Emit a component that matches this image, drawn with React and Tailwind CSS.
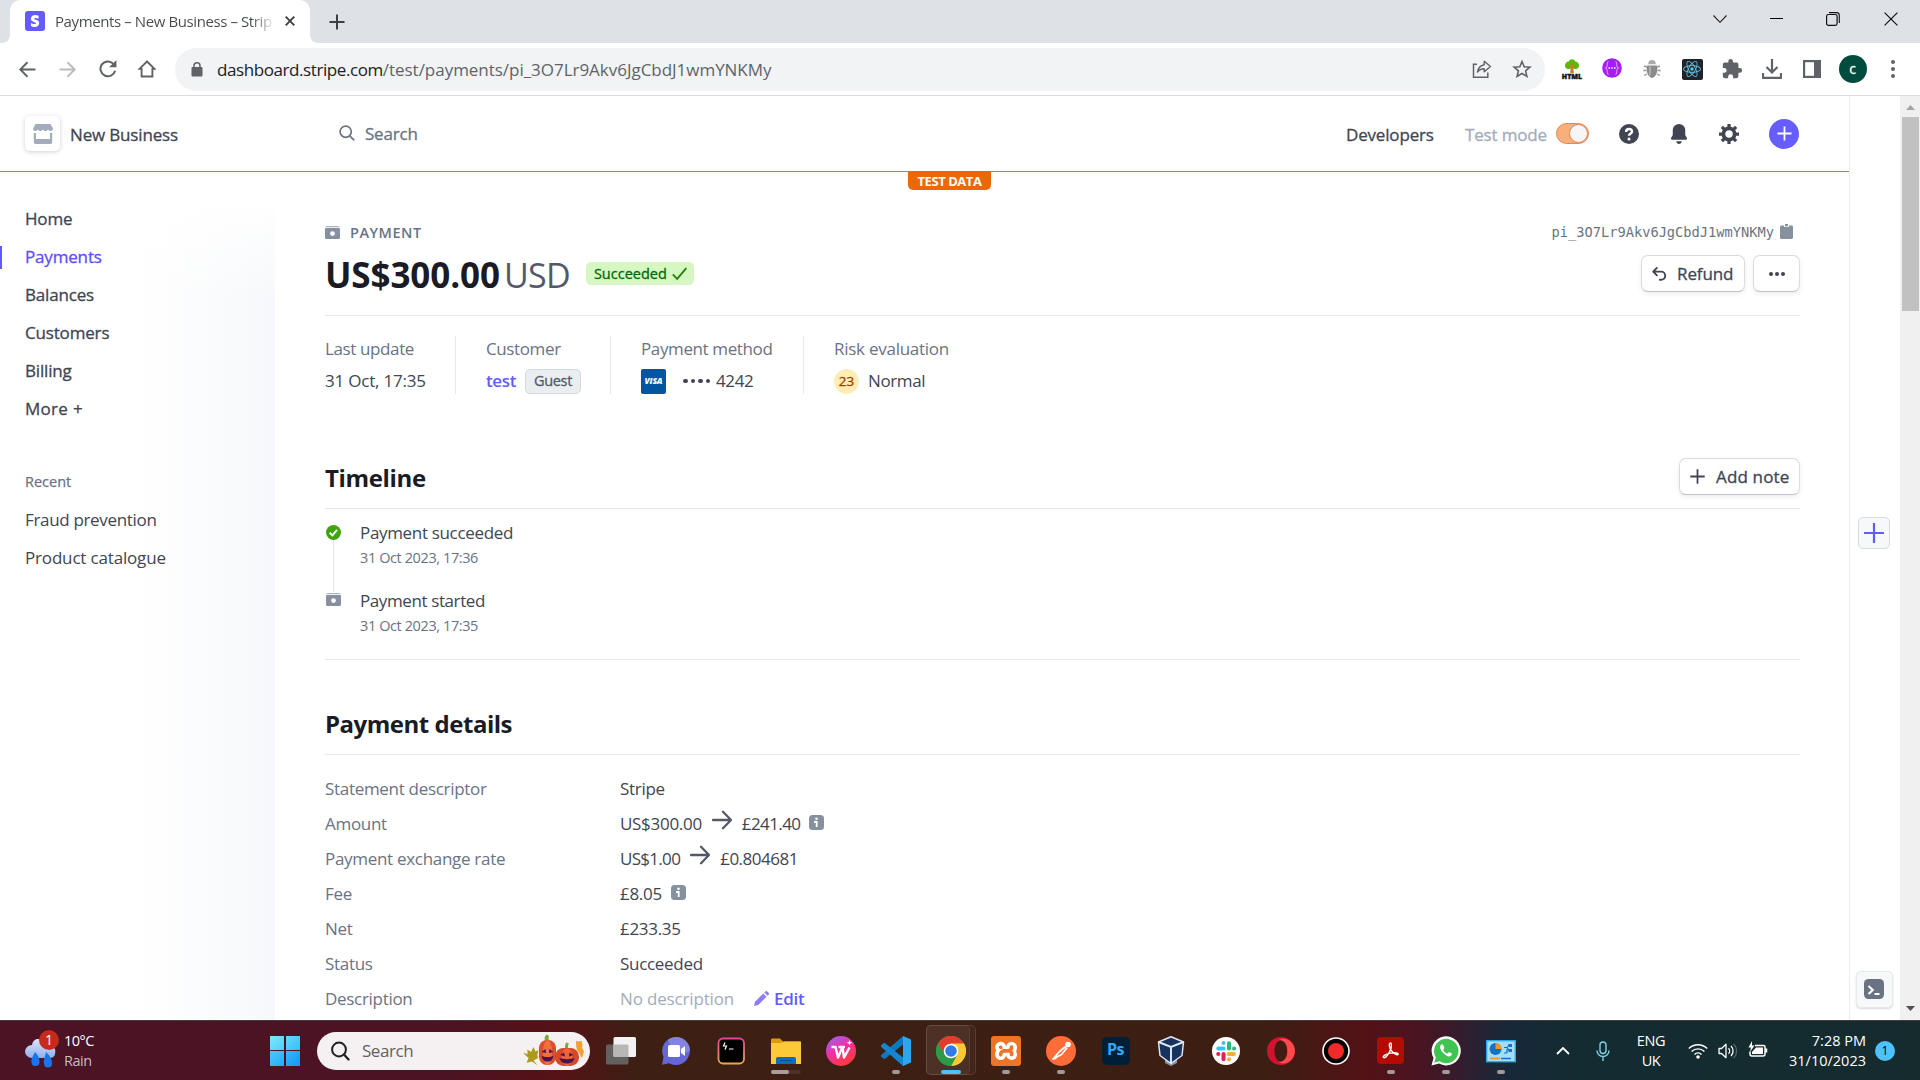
import { SiXampp, SiReact } from "react-icons/si";

const Svg = ({ children, className = "", vb = "0 0 16 16" }) => (
  <svg viewBox={vb} className={`shrink-0 ${className}`} fill="none">
    {children}
  </svg>
);

/* ---------- Browser chrome ---------- */

function TabStrip() {
  return (
    <div className="flex h-[43px] shrink-0 items-stretch bg-[#dee1e6] pr-px">
      <div className="flex w-[10px] items-end bg-white">
        <div className="h-full w-full rounded-br-[8px] bg-[#dee1e6]" />
      </div>
      <div className="w-[300px] bg-[#dee1e6]">
        <div className="flex h-full items-center rounded-t-[10px] bg-white pb-px pl-[15px]">
          <Svg vb="0 0 20 20" className="size-5">
            <rect width="20" height="20" rx="3" fill="#635bff" />
            <path
              d="M9.2 7.7c0-.5.4-.8 1.1-.8 1 0 2.300.3 3.300.9V4.700C12.500 4.200 11.400 4 10.300 4 7.600 4 5.900 5.400 5.900 7.700c0 3.600 5 3 5 4.600 0 .6-.5.8-1.300.8-1.100 0-2.500-.5-3.700-1.100v3.100c1.300.6 2.500.8 3.700.8 2.700 0 4.600-1.300 4.600-3.700 0-3.900-5-3.200-5-4.500z"
              fill="#fff"
            />
          </Svg>
          <div className="ml-[10px] w-[218px] bg-linear-to-r from-[#45494d] from-90% to-white to-101% bg-clip-text text-[15px] tracking-[-0.4px] whitespace-nowrap text-transparent">
            Payments – New Business – Strip
          </div>
          <Svg vb="0 0 10 10" className="ml-[12px] size-[10px]">
            <path d="M.7.7l8.600 8.600M9.300.7L.7 9.300" stroke="#3c4043" strokeWidth="1.900" />
          </Svg>
        </div>
      </div>
      <div className="flex w-[10px] items-end bg-white">
        <div className="h-full w-full rounded-bl-[8px] bg-[#dee1e6]" />
      </div>
      <div className="flex flex-1 items-center pl-[9px]">
        <Svg vb="0 0 16 16" className="size-4">
          <path d="M8 .5v15M.5 8h15" stroke="#3c4043" strokeWidth="2" />
        </Svg>
      </div>
      <div className="flex h-[37px] items-center">
        <div className="flex w-[57px] justify-center">
          <Svg vb="0 0 14 8" className="h-2 w-[14px]">
            <path d="M.5.500L7 7.300 13.500.500" stroke="#222" strokeWidth="1.100" />
          </Svg>
        </div>
        <div className="flex w-[56px] justify-center">
          <div className="h-px w-[13px] bg-black" />
        </div>
        <div className="flex w-[58px] justify-center">
          <Svg vb="0 0 14 14" className="size-[14px]">
            <rect x=".6" y="2.500" width="10.500" height="10.900" rx="1.800" stroke="#111" strokeWidth="1.200" />
            <path d="M3 .6h7.500a2.800 2.800 0 0 1 2.800 2.800v7.600" stroke="#111" strokeWidth="1.100" />
          </Svg>
        </div>
        <div className="flex w-[57px] justify-center">
          <Svg vb="0 0 14 14" className="size-[14px]">
            <path d="M.6.600l12.800 12.800M13.400.600L.6 13.400" stroke="#111" strokeWidth="1.200" />
          </Svg>
        </div>
      </div>
    </div>
  );
}

const Cell = ({ children }) => <div className="flex w-10 shrink-0 items-center justify-center">{children}</div>;

function HtmlTreeIcon() {
  return (
    <div className="flex w-5 flex-col items-center">
      <Svg vb="0 0 20 14" className="h-[14px] w-5">
        <path d="M9 5h2l.8 9H8.200z" fill="#d2762a" />
        <path d="M10 .3c1.800 0 2.800 1 3.200 2.200 2 .1 3.600 1.600 3.800 3.800.2 2.700-2 4.200-4 3.700C12 9.800 11.500 9 10 9s-2 .800-3 1c-2.200.5-4.200-1-4-3.700.2-2.200 1.700-3.700 3.800-3.800C7.200 1.300 8.200.3 10 .3z" fill="#5fb70c" />
        <path d="M10 5v7M10 8l2.500-2M10 8.500L7.500 6.500" stroke="#d2762a" strokeWidth="1.300" />
      </Svg>
      <span className="text-[7px] leading-[7px] font-extrabold text-[#111] [-webkit-text-stroke:0.4px]">HTML</span>
    </div>
  );
}

function BugIcon() {
  return (
    <Svg vb="0 0 20 20" className="size-5">
      <path d="M4.800 8L2 7M4.500 11.500H1.300M5 15l-2.700 1.500M15.200 8L18 7M15.500 11.500h3.200M15 15l2.700 1.500" stroke="#999" strokeWidth="1.400" />
      <path d="M6.300 5.200C6 2.500 7.800 1 10 1s4 1.500 3.700 4.200z" fill="#aaa" />
      <path d="M5 6.500h10c1.200 6-1 11.700-5 12.500-4-.8-6.200-6.500-5-12.500z" fill="#8c8c8c" />
      <path d="M8 7.500v9" stroke="#b5b5b5" strokeWidth="1.600" />
    </Svg>
  );
}

function Toolbar() {
  return (
    <div className="flex h-[53px] shrink-0 items-center border-b border-[#d9dbde] bg-white pl-[7px]">
      <Cell>
        <Svg className="size-[17px]"><path d="M15.500 8H1.500M8 1.200L1.200 8 8 14.800" stroke="#5f6368" strokeWidth="1.800" /></Svg>
      </Cell>
      <Cell>
        <Svg className="size-[17px]"><path d="M.5 8h14M8 1.200L14.800 8 8 14.800" stroke="#babcbe" strokeWidth="1.800" /></Svg>
      </Cell>
      <Cell>
        <Svg className="ml-px size-[18px]">
          <path d="M14.300 9.500A6.600 6.600 0 1 1 12.800 3.400" stroke="#5f6368" strokeWidth="1.800" />
          <path d="M15.500 0v6.500H9z" fill="#5f6368" />
        </Svg>
      </Cell>
      <Cell>
        <Svg className="size-[18px]"><path d="M8 1.300L1.300 7.900H3.200v6.800h9.600V7.900h1.900z" stroke="#5f6368" strokeWidth="1.700" /></Svg>
      </Cell>
      <div className="ml-[8px] flex h-[43px] w-[1370px] items-center rounded-full bg-[#f1f3f4] pr-[3px] pl-[16px]">
        <Svg vb="0 0 12 15" className="h-[15px] w-3">
          <rect x=".5" y="5" width="11" height="9.500" rx="1" fill="#5f6368" />
          <path d="M3 6V3.800a3 3 0 0 1 6 0V6" stroke="#5f6368" strokeWidth="1.500" />
        </Svg>
        <div className="ml-[14px] flex-1 pt-px text-[17px] tracking-[-0.03px] whitespace-nowrap text-[#5f6368]">
          <span className="tracking-[-0.42px] text-[#202124]">dashboard.stripe.com</span>
          /test/payments/pi_3O7Lr9Akv6JgCbdJ1wmYNKMy
        </div>
        <Cell>
          <Svg vb="0 0 20 20" className="size-5">
            <path d="M5 5.200H1.500v13h14.300V13.500" stroke="#5f6368" strokeWidth="1.500" />
            <path d="M12.200 2.200l6.300 5.300-6.300 5.300V9.800c-3 0-5 1-6.700 3.300.7-4 3-6.600 6.700-7.300z" stroke="#5f6368" strokeWidth="1.400" strokeLinejoin="round" />
          </Svg>
        </Cell>
        <Cell>
          <Svg vb="0 0 20 20" className="size-5">
            <path d="M10 2.500l2.200 5.200 5.700.5-4.300 3.700 1.300 5.500-4.900-2.900-4.900 2.900 1.300-5.500L2.100 8.200l5.700-.5z" stroke="#5f6368" strokeWidth="1.600" />
          </Svg>
        </Cell>
      </div>
      <div className="ml-[7px] flex">
        <Cell><HtmlTreeIcon /></Cell>
        <Cell>
          <Svg vb="0 0 20 20" className="mb-[3px] size-5">
            <circle cx="10" cy="10" r="9.800" fill="#a41df2" />
            <path d="M6.500 3.300C4.500 4 5.600 7 5 8.500c-.3 1-1.500 1.500-1.500 1.500s1.200.5 1.500 1.500c.6 1.500-.5 4.500 1.500 5.200M13.500 3.300c2 .7.900 3.700 1.500 5.200.3 1 1.500 1.500 1.500 1.500s-1.200.5-1.500 1.500c-.6 1.500.5 4.500-1.500 5.200" stroke="#d98cff" strokeWidth="1.200" />
            <path d="M6.500 10h1.500M9.250 10h1.500M12 10h1.500" stroke="#fff" strokeWidth="1.500" />
          </Svg>
        </Cell>
        <Cell><BugIcon /></Cell>
        <Cell>
          <div className="flex size-[21px] items-center justify-center rounded-[2px] bg-[#20232a]">
            <SiReact className="size-[18px] text-[#61c5e8]" />
          </div>
        </Cell>
        <Cell>
          <Svg vb="0 0 24 24" className="size-[22px]">
            <path d="M20.500 11H19V7a2 2 0 0 0-2-2h-4V3.500a2.500 2.500 0 0 0-5 0V5H4a2 2 0 0 0-2 2v3.800h1.500a2.700 2.700 0 0 1 0 5.400H2V20a2 2 0 0 0 2 2h3.800v-1.500a2.700 2.700 0 0 1 5.400 0V22H17a2 2 0 0 0 2-2v-4h1.500a2.500 2.500 0 0 0 0-5z" fill="#5f6368" />
          </Svg>
        </Cell>
        <Cell>
          <Svg vb="0 0 20 20" className="size-5">
            <path d="M10 0v13M4.500 8l5.500 5.500L15.500 8M1 14v4.900h18V14" stroke="#5f6368" strokeWidth="2.200" />
          </Svg>
        </Cell>
        <Cell>
          <Svg vb="0 0 18 18" className="size-[18px]">
            <rect x="1.100" y="1.100" width="15.800" height="15.800" stroke="#5f6368" strokeWidth="2.200" />
            <path d="M11 1h6v16h-6z" fill="#5f6368" />
          </Svg>
        </Cell>
        <div className="flex w-[41px] items-center justify-center">
          <div className="flex size-7 items-center justify-center rounded-full bg-[#004d40] pb-px text-[14px] text-white [-webkit-text-stroke:0.3px]">c</div>
        </div>
        <Cell>
          <div className="flex flex-col gap-[3px]">
            <div className="size-[4px] rounded-full bg-[#5f6368]" />
            <div className="size-[4px] rounded-full bg-[#5f6368]" />
            <div className="size-[4px] rounded-full bg-[#5f6368]" />
          </div>
        </Cell>
      </div>
    </div>
  );
}

/* ---------- Dashboard ---------- */

function Header() {
  return (
    <header className="relative flex h-[76px] shrink-0 items-center border-b border-[#e56f2a] pr-[50px] pl-[25px] text-[17px] tracking-[-0.17px] text-[#414552] [-webkit-text-stroke:0.3px]">
      <div className="flex size-[35px] items-center justify-center rounded-[5px] bg-white shadow-[0_1px_4px_rgba(60,66,87,0.25)]">
        <Svg vb="0 0 20 20" className="size-5">
          <path d="M2.500 0h15L20 4.500C20 6 19 7 17.600 7c-1.200 0-2-.7-2.500-1.500C14.600 6.300 13.700 7 12.500 7S10.500 6.300 10 5.500C9.500 6.300 8.700 7 7.500 7S5.400 6.300 4.900 5.500C4.400 6.300 3.600 7 2.400 7 1 7 0 6 0 4.500z" fill="#a3acba" />
          <path d="M.800 9h2.200v6h14V9h2.200v9.200a1.800 1.800 0 0 1-1.800 1.800H2.600a1.800 1.800 0 0 1-1.800-1.800z" fill="#a3acba" />
        </Svg>
      </div>
      <div className="ml-[10px] w-[269px] pt-[2px]">New Business</div>
      <Svg className="mb-[2px] size-4">
        <circle cx="6.700" cy="6.700" r="5.600" stroke="#6a7383" strokeWidth="1.700" />
        <path d="M10.800 10.800l4.500 4.500" stroke="#6a7383" strokeWidth="1.700" />
      </Svg>
      <div className="ml-[10px] flex-1 tracking-[-0.2px] text-[#6a7383]">Search</div>
      <div className="w-[119px] pt-[2px]">Developers</div>
      <div className="w-[91px] pt-[2px] text-[#a3acba]">Test mode</div>
      <div className="flex h-[21px] w-[33px] justify-end rounded-full border border-[#e5884f] bg-[#f7b07c]">
        <div className="size-[19px] rounded-full border border-[#dd8a58] bg-[#f6f6f8]" />
      </div>
      <Svg className="ml-[30px] size-5">
        <circle cx="8" cy="8" r="8" fill="#414552" />
        <path d="M5.700 6.300C5.700 4.800 6.700 4 8 4s2.400.8 2.400 2.100C10.400 7.600 8 7.700 8 9.400" stroke="#fff" strokeWidth="1.900" />
        <circle cx="8" cy="12" r="1.200" fill="#fff" />
      </Svg>
      <Svg className="ml-[30px] size-5">
        <path d="M8 0a5 5 0 0 1 5 5v3.500c0 1 1.400 1.800 1.400 3 0 .6-.4 1-1 1H2.600c-.6 0-1-.4-1-1 0-1.200 1.400-2 1.400-3V5a5 5 0 0 1 5-5zM5.800 13.800h4.400C10 15 9.200 16 8 16s-2-1-2.200-2.200z" fill="#414552" />
      </Svg>
      <Svg className="ml-[30px] size-5">
        <circle cx="8" cy="8" r="4.500" stroke="#414552" strokeWidth="3" />
        <path d="M8 0v3M8 13v3M0 8h3M13 8h3M2.300 2.300l2 2M11.700 11.700l2 2M2.300 13.700l2-2M11.700 4.300l2-2" stroke="#414552" strokeWidth="2.600" />
      </Svg>
      <div className="ml-[30px] flex size-[30px] items-center justify-center rounded-full bg-[#675dff]">
        <Svg className="size-[15px]"><path d="M8 .5v15M.5 8h15" stroke="#fff" strokeWidth="1.900" /></Svg>
      </div>
      <div className="absolute top-[75px] left-[908px] flex h-[19px] w-[83px] items-center justify-center rounded-b-[5px] bg-[#ed6704] pt-[2px] text-[13px] font-bold tracking-[-0.45px] text-white [-webkit-text-stroke:0px]">
        TEST DATA
      </div>
    </header>
  );
}

const NAV = ["Home", "Payments", "Balances", "Customers", "Billing"];

function Sidebar() {
  return (
    <aside className="relative w-[275px] shrink-0 bg-linear-to-r from-white from-50% to-[#f6f8fb]">
      <div className="absolute inset-x-0 top-0 h-[130px] bg-linear-to-b from-white from-20% to-transparent" />
      <nav className="relative flex flex-col pt-[28px] text-[17px] text-[#414552]">
        <div className="tracking-[-0.17px] [-webkit-text-stroke:0.3px]">
          {NAV.map((n) =>
            n === "Payments" ? (
              <div key={n} className="flex h-[38px] items-center text-[#5e4dff]">
                <div className="mr-[23px] h-[23px] w-[2px] bg-[#625afa]" />
                {n}
              </div>
            ) : (
              <div key={n} className="flex h-[38px] items-center pl-[25px]">{n}</div>
            )
          )}
          <div className="flex h-[38px] items-center pl-[25px] tracking-[0.3px]">More +</div>
        </div>
        <div className="mt-[35px] flex h-[38px] items-center pl-[25px] text-[14.500px] text-[#6a7383] [-webkit-text-stroke:0.25px]">Recent</div>
        <div className="flex h-[38px] items-center pl-[25px] tracking-[-0.33px]">Fraud prevention</div>
        <div className="flex h-[38px] items-center pl-[25px] tracking-[-0.17px]">Product catalogue</div>
      </nav>
    </aside>
  );
}

function CashIcon({ className = "" }) {
  return (
    <Svg vb="0 0 15 13" className={`h-[13px] w-[15px] ${className}`}>
      <path d="M.800 0h13.400v1.200H.8z" fill="#a9b1be" />
      <path fillRule="evenodd" d="M0 3.200C0 2.500.5 2 1.200 2h12.600c.7 0 1.200.5 1.200 1.200v8.600c0 .7-.5 1.200-1.200 1.200H1.200C.5 13 0 12.500 0 11.800zM7.500 5.200a2.400 2.400 0 1 0 0 4.800 2.400 2.400 0 0 0 0-4.800z" fill="#87909f" />
    </Svg>
  );
}

const btn =
  "flex h-[37px] items-center rounded-[7px] border border-[#d8dbe0] border-b-[#bfc2c8] bg-white text-[17px] text-[#414552] shadow-[0_2px_4px_rgba(60,66,87,0.10)] [-webkit-text-stroke:0.3px]";

const Label = ({ children }) => <div className="flex h-8 shrink-0 items-center text-[#6a7383]">{children}</div>;
const Value = ({ children }) => <div className="flex h-8 shrink-0 items-center text-[#414552]">{children}</div>;

const Column = ({ className = "", children }) => (
  <div className={`flex h-[58px] flex-col justify-center border-[#e6eaee] ${className}`}>{children}</div>
);

function Summary() {
  return (
    <div className="flex pt-[20px] text-[17px] tracking-[-0.38px] whitespace-nowrap">
      <Column className="w-[131px] border-r">
        <Label>Last update</Label>
        <Value><span className="tracking-[-0.2px]">31 Oct, 17:35</span></Value>
      </Column>
      <Column className="w-[155px] border-r pl-[30px]">
        <Label>Customer</Label>
        <Value>
          <span className="w-[39px] font-semibold text-[#635bff]">test</span>
          <span className="flex h-[25px] w-[56px] items-center justify-center rounded-[5px] border border-[#d2d8e0] bg-[#ebeef1] text-[14.500px] tracking-[-0.3px] text-[#545969] [-webkit-text-stroke:0.3px]">
            Guest
          </span>
        </Value>
      </Column>
      <Column className="w-[193px] border-r pl-[30px]">
        <Label>Payment method</Label>
        <Value>
          <span className="flex size-[25px] items-center justify-center rounded-[2px] bg-[#00579f] text-[8.500px] font-extrabold tracking-[-0.2px] text-white italic">
            VISA
          </span>
          <span className="mr-[6px] ml-[17px] flex gap-[3px]">
            <i className="size-[4.500px] rounded-full bg-[#414552]" />
            <i className="size-[4.500px] rounded-full bg-[#414552]" />
            <i className="size-[4.500px] rounded-full bg-[#414552]" />
            <i className="size-[4.500px] rounded-full bg-[#414552]" />
          </span>
          4242
        </Value>
      </Column>
      <Column className="pl-[30px]">
        <Label><span className="tracking-[-0.26px]">Risk evaluation</span></Label>
        <Value>
          <span className="mr-[9px] flex size-[25px] items-center justify-center rounded-full bg-[#fceeb5] text-[13.500px] tracking-normal text-[#b13600] [-webkit-text-stroke:0.3px]">23</span>
          Normal
        </Value>
      </Column>
    </div>
  );
}

const InfoIcon = () => (
  <Svg vb="0 0 15 15" className="mb-[3px] ml-[9px] size-[15px]">
    <rect width="15" height="15" rx="3.500" fill="#87909f" />
    <circle cx="7.500" cy="3.700" r="1.300" fill="#fff" />
    <path d="M5 7h2.700v5" stroke="#fff" strokeWidth="1.800" />
  </Svg>
);

const Arrow = () => (
  <Svg vb="0 0 20 20" className="mx-[10px] mb-[7px] size-5">
    <path d="M1 10h17.500M11 1.800l8 8.200-8 8.200" stroke="#545969" strokeWidth="2.300" strokeLinecap="round" strokeLinejoin="round" />
  </Svg>
);

const DETAILS = [
  ["Statement descriptor", "Stripe"],
  ["Amount", <>US$300.00<Arrow /><span className="tracking-[-0.6px]">£241.40</span><InfoIcon /></>],
  ["Payment exchange rate", <><span className="tracking-[-0.7px]">US$1.00</span><Arrow /><span className="tracking-[-0.5px]">£0.804681</span></>],
  ["Fee", <>£8.05<InfoIcon /></>],
  ["Net", "£233.35"],
  ["Status", "Succeeded"],
  [
    "Description",
    <>
      <span className="tracking-[-0.16px] text-[#a3acba]">No description</span>
      <span className="ml-[20px] flex items-center font-semibold text-[#635bff]">
        <Svg className="mr-[5px] size-[15px]">
          <path d="M0 16l1-4.500L9.800 2.700l3.500 3.500L4.500 15zM11 1.500L12 .500a1.500 1.500 0 0 1 2.100 0L15.500 1.900a1.500 1.500 0 0 1 0 2.100l-1 1z" fill="#8d7ffa" />
        </Svg>
        Edit
      </span>
    </>,
  ],
];

function Main() {
  return (
    <main className="flex w-[1525px] flex-col pt-[45px] pl-[50px]">
      <div className="flex h-[31px] items-center pr-[7px]">
        <CashIcon />
        <span className="ml-[10px] flex-1 text-[14.500px] font-semibold tracking-[0.5px] text-[#6a7383]">PAYMENT</span>
        <span className="font-['DejaVu_Sans_Mono',monospace] text-[13.700px] text-[#6a7383]">pi_3O7Lr9Akv6JgCbdJ1wmYNKMy</span>
        <Svg vb="0 0 13 15" className="mb-[2px] ml-[6px] h-[15px] w-[13px]">
          <path d="M1.500 1.500H4V3h5V1.500h2.500c.8 0 1.500.6 1.500 1.400v10.600c0 .8-.7 1.500-1.500 1.500h-10C.7 15 0 14.300 0 13.500V2.900c0-.8.7-1.400 1.500-1.400z" fill="#87909f" />
          <path d="M5 0h3v2.300H5z" fill="#87909f" />
        </Svg>
      </div>
      <div className="flex h-[68px] items-center border-b border-[#e6eaee] pb-[16px]">
        <span className="pt-[2px] text-[35px] leading-none font-bold tracking-[-0.1px] text-[#1a1b25]">US$300.00</span>
        <span className="ml-[4px] pt-[2px] text-[34px] leading-none tracking-[-0.7px] text-[#545969]">USD</span>
        <span className="ml-[16px] flex h-[23px] w-[108px] items-center rounded-[5px] bg-[#d7f7c2] pl-[8px] text-[14.500px] text-[#006908] [-webkit-text-stroke:0.3px]">
          Succeeded
          <Svg className="ml-[5px] size-[15px]"><path d="M.8 9l4.700 4.700L15.300 2.300" stroke="#228403" strokeWidth="2" /></Svg>
        </span>
        <div className={`${btn} ml-auto w-[104px] pl-[10px] tracking-[-0.1px]`}>
          <Svg className="mr-[10px] size-[15px]">
            <path d="M5.200 2L1.300 6l3.900 4M1.500 6h8.300a4.300 4.300 0 0 1 0 8.600H8.300" stroke="#414552" strokeWidth="2" strokeLinecap="round" strokeLinejoin="round" />
          </Svg>
          Refund
        </div>
        <div className={`${btn} ml-[8px] w-[47px] justify-center gap-[2px]`}>
          <i className="size-[4px] rounded-full bg-[#414552]" />
          <i className="size-[4px] rounded-full bg-[#414552]" />
          <i className="size-[4px] rounded-full bg-[#414552]" />
        </div>
      </div>
      <Summary />

      <div className="mt-[56px] flex h-[59px] items-center border-b border-[#e3e8ee]">
        <h2 className="flex-1 pb-[2px] text-[24px] font-bold tracking-[-0.34px] text-[#1a1b25]">Timeline</h2>
        <div className={`${btn} mb-[5px] w-[121px] pl-[10px]`}>
          <Svg className="mr-[11px] size-[15px]"><path d="M8 .300v15.400M.3 8h15.400" stroke="#414552" strokeWidth="1.900" /></Svg>
          <span className="pt-px tracking-[0.15px]">Add note</span>
        </div>
      </div>
      <div className="flex h-[151px] gap-[20px] border-b border-[#e6eaee] pt-[11px]">
        <div className="flex w-[16px] flex-col items-center pt-[5px]">
          <Svg className="size-[15px]">
            <circle cx="8" cy="8" r="8" fill="#3fa40d" />
            <path d="M4 8.300l2.800 2.800 5-5.800" stroke="#fff" strokeWidth="2" />
          </Svg>
          <div className="h-[52px] w-px bg-[#e0e5ea]" />
          <CashIcon className="mt-px" />
        </div>
        <div className="-ml-px text-[17px] leading-[25px]">
          <div className="tracking-[-0.33px] text-[#414552]">Payment succeeded</div>
          <div className="mb-[18px] text-[14.500px] tracking-[-0.4px] text-[#6a7383]">31 Oct 2023, 17:36</div>
          <div className="tracking-[-0.4px] text-[#414552]">Payment started</div>
          <div className="text-[14.500px] tracking-[-0.4px] text-[#6a7383]">31 Oct 2023, 17:35</div>
        </div>
      </div>

      <div className="mt-[36px] flex h-[59px] items-center border-b border-[#e6eaee]">
        <h2 className="pb-[2px] text-[24px] font-bold tracking-[-0.48px] text-[#1a1b25]">Payment details</h2>
      </div>
      <dl className="pt-[16px] text-[17px] tracking-[-0.3px]">
        {DETAILS.map(([k, v]) => (
          <div key={k} className="flex h-[35px] items-center">
            <dt className="w-[295px] text-[#6a7383]">{k}</dt>
            <dd className="flex items-center text-[#414552]">{v}</dd>
          </div>
        ))}
      </dl>
    </main>
  );
}

function Rail() {
  return (
    <div className="flex w-[51px] shrink-0 flex-col items-center justify-between border-l border-[#ebeef1] bg-white pt-[421px] pr-[2px] pb-[12px]">
      <div className="flex size-8 items-center justify-center rounded-[5px] border border-[#d5dbe1] bg-[#f6f8fa]">
        <Svg vb="0 0 20 20" className="size-5"><path d="M10 0v20M0 10h20" stroke="#635bff" strokeWidth="2.200" /></Svg>
      </div>
      <div className="flex size-[37px] items-center justify-center rounded-[5px] border border-[#e6e9ee] bg-[#f6f8fa] shadow-[0_1px_2px_rgba(60,66,87,0.2)]">
        <Svg vb="0 0 20 20" className="mb-[2px] size-5">
          <rect width="20" height="20" rx="4.500" fill="#6a7383" />
          <path d="M4.500 7l4.300 4-4.300 4M10.500 15h5" stroke="#fff" strokeWidth="2.100" />
        </Svg>
      </div>
    </div>
  );
}

function Scrollbar() {
  return (
    <div className="flex w-5 shrink-0 flex-col items-center bg-[#f0f0f0]">
      <div className="flex h-[21px] items-center pt-[2px]">
        <Svg vb="0 0 9 5" className="h-[5px] w-[9px]"><path d="M0 5L4.500 0 9 5z" fill="#a3a3a3" /></Svg>
      </div>
      <div className="h-[194px] w-[17px] bg-[#c1c1c1]" />
      <div className="mt-auto flex h-[24px] items-center">
        <Svg vb="0 0 9 5" className="h-[5px] w-[9px]"><path d="M0 0l4.500 5L9 0z" fill="#505050" /></Svg>
      </div>
    </div>
  );
}

/* ---------- Taskbar ---------- */

function WeatherIcon() {
  return (
    <div className="relative mb-[4px] flex">
      <Svg vb="0 0 34 38" className="h-[38px] w-[34px]">
        <defs>
          <linearGradient id="cloud" x1="0" y1="0" x2="0" y2="1"><stop stopColor="#dbe6fa" /><stop offset="1" stopColor="#8fb0ec" /></linearGradient>
        </defs>
        <path d="M8 28a7 6.500 0 0 1 0-13C9 9 14 8 18 10c5 1 8 3 9 6 4 1 5 4 4 8-.5 3-3 4-6 4z" fill="url(#cloud)" />
        <path d="M11 22c3 3 4.500 6 4.500 9.500a4 4 0 0 1-8 1C6.500 30 9 26 11 22zM22 22c4 4 6 7 6 11a4 4 0 0 1-8 1c-1-3 1-7 2-12z" fill="#1a74ee" />
      </Svg>
      <div className="absolute top-0 left-[15px] flex size-5 items-center justify-center rounded-full bg-[#c42b1c] text-[14px]">1</div>
    </div>
  );
}

function Pumpkins() {
  return (
    <Svg vb="0 0 62 34" className="h-[34px] w-[62px]">
      <path d="M0 19l4.500 1 0-4.500 3.500 2.500 2.500-5 2 4.500 3-1.500-1.200 5 .8 3-4.500 2.500 4 5-5.500-4-5.500 1.200 2-4.700z" fill="#ab9a1c" />
      <path d="M53 7c3 1 4 0 5.500 0l1 3.500-.5 3 2 4-2 6.500c-2-2-1.500-4-3.500-6s-2.500-5-2.500-11z" fill="#f0a030" />
      <path d="M22 7c-1-3 0-5 1.500-6.500L26 2c-1 2 0 4 .5 5.500z" fill="#76a83c" />
      <rect x="16" y="6" width="17" height="25" rx="8" fill="#dd4f2c" />
      <ellipse cx="24.500" cy="18.500" rx="4.500" ry="12.500" fill="#ee6f42" />
      <path d="M42 15c0-3 0-4 1-6.500l3 1c-1.500 2-1 4-.5 6z" fill="#76a83c" />
      <rect x="32" y="14" width="24" height="18" rx="8.500" fill="#d84824" />
      <ellipse cx="44" cy="23" rx="5.500" ry="9" fill="#ee6338" />
      <path d="M18.500 18l4-3 .5 4zM26.500 15l4 3-4.500 1zM18.500 21.500c3 2 9 2 12 0-1 5-3 6-6 6s-5-1-6-6zM37 21l4-2.500 1 4zM46.500 18.500l4 2.500-4.500 1.500zM36.500 24c4 1.500 11 1.500 15 0-1 4-4 5.500-7.500 5.500s-6.500-1.500-7.500-5.500z" fill="#4a1450" />
    </Svg>
  );
}

const I30 = ({ children }) => <Svg vb="0 0 30 30" className="size-[30px]">{children}</Svg>;

const TaskView = () => (
  <I30>
    <rect x="0" y="8.500" width="22.500" height="20" rx="1.500" fill="#636160" />
    <rect x="7.500" y="1" width="22.500" height="20" rx="1.500" fill="#f2f2f2" />
    <path d="M7.500 8.500h13.500a1.500 1.500 0 0 1 1.500 1.500v11H9a1.500 1.500 0 0 1-1.500-1.500z" fill="#b9b7b6" />
  </I30>
);
const Chat = () => (
  <I30>
    <path d="M15 1a14 14 0 1 1-7 26.200L1 28.800 2.500 21A14 14 0 0 1 15 1z" fill="#6468d4" />
    <path d="M15 1a14 14 0 0 1 14 14c-9 4-18 0-22-11.500A14 14 0 0 1 15 1z" fill="#8484dc" />
    <rect x="7" y="9" width="12" height="12" rx="1.500" fill="#fff" />
    <path d="M20 13l4-3v10l-4-3z" fill="#fff" />
  </I30>
);
const Terminal = () => (
  <I30>
    <defs>
      <linearGradient id="term" x1="0" y1="0" x2="0" y2="1"><stop stopColor="#e0459f" /><stop offset="1" stopColor="#f2a742" /></linearGradient>
    </defs>
    <rect x="2.500" y="2.500" width="25.500" height="25" rx="4.500" fill="#000" stroke="url(#term)" strokeWidth="1.800" />
    <path d="M9 6.500L7.500 10h3L9 13.500M13 13h4.500" stroke="#fff" strokeWidth="1.200" />
  </I30>
);
const Explorer = () => (
  <I30>
    <path d="M0 4c0-1 .5-1.500 1.500-1.500H9l3 3H28c1.300 0 2 .7 2 2V12H0z" fill="#dd9a0a" />
    <path d="M0 7h10l3-1.500h17V28H0z" fill="#fcca38" />
    <path d="M5 28v-5c0-1.500 1-2 2-2h16c1 0 2 .5 2 2v5z" fill="#0a6dc2" />
    <path d="M9 24.500h12" stroke="#064e8f" strokeWidth="1" />
  </I30>
);
const Wps = () => (
  <I30>
    <defs>
      <linearGradient id="wps" x1="0" y1="0" x2=".6" y2="1"><stop stopColor="#8b6bff" /><stop offset=".5" stopColor="#ee30a8" /><stop offset="1" stopColor="#ff3a3a" /></linearGradient>
    </defs>
    <circle cx="15" cy="15" r="15" fill="url(#wps)" />
    <path d="M5.500 11H9.500l2.500 10.500L16.500 11 18 21.500 23.500 11.500M12.500 11h6.500" stroke="#fff" strokeWidth="2.400" strokeLinejoin="round" />
    <path d="M23.500 4l.8 2 2 .8-2 .8-.8 2-.8-2-2-.8 2-.8z" fill="#fff" />
  </I30>
);
const VsCode = () => (
  <I30>
    <path d="M22 0v8.500L3.500 23.200 0 20.700v-1.500z" fill="#0e78bf" />
    <path d="M0 9.300l3.500-2.500L22 21.500V30L0 10.800z" fill="#1386cf" />
    <path d="M22 0l8 3.500v23L22 30z" fill="#29a8f2" />
  </I30>
);
const Chrome = () => (
  <I30>
    <circle cx="15" cy="15" r="15" fill="#34a853" />
    <path d="M2 7.500A15 15 0 0 1 28 7.500L15 8 8.700 18.500z" fill="#e33b2e" />
    <path d="M28 7.500A15 15 0 0 1 15 30l6.300-11.500L15 7.500z" fill="#fcc934" />
    <path d="M2 7.500A15 15 0 0 0 15 30l6.400-11.500H8.600z" fill="#2c9a48" />
    <circle cx="15" cy="15" r="7.300" fill="#fff" />
    <circle cx="15" cy="15" r="5.800" fill="#2f7bea" />
  </I30>
);
const Xampp = () => (
  <div className="flex size-[30px] items-center justify-center rounded-[3px] bg-[#ee7426]">
    <div className="flex size-[24px] items-center justify-center overflow-hidden bg-white">
      <SiXampp className="size-[30px] shrink-0 text-[#ee7426]" />
    </div>
  </div>
);
const Postman = () => (
  <I30>
    <circle cx="15" cy="15" r="15" fill="#ff6c37" />
    <path d="M7 23l6-7 6-5 1.500 1.500-5 6zM7 23l3.500-.8" stroke="#fff" strokeWidth="1.700" strokeLinejoin="round" />
    <circle cx="22" cy="8.500" r="2" fill="#fff" stroke="#fff" strokeWidth="1.600" />
  </I30>
);
const Photoshop = () => (
  <div className="flex size-[28px] items-center justify-center rounded-[5px] bg-[#001e36] pb-[3px] text-[16px] font-bold tracking-[-0.5px] text-[#31a8ff]">Ps</div>
);
const VBox = () => (
  <I30>
    <path d="M9 24l6-2 6 2v3l-6 3-6-3z" fill="#8795a9" />
    <path d="M15 .8L27.500 6 26 19.500 15 27.500 4 19.500 2.500 6z" fill="#16325e" stroke="#dfe6f0" strokeWidth="1.500" strokeLinejoin="round" />
    <path d="M2.500 6L15 11l12.500-5M15 11v16" stroke="#dfe6f0" strokeWidth="2" />
  </I30>
);
const Slack = () => (
  <I30>
    <circle cx="15" cy="15" r="14" fill="#fff" />
    <g strokeWidth="4" strokeLinecap="round">
      <path d="M7.300 12.500h5.200" stroke="#36c5f0" /><path d="M12.500 7v.1" stroke="#36c5f0" />
      <path d="M18 7.200v5.300" stroke="#2eb67d" /><path d="M23 12.500h.1" stroke="#2eb67d" />
      <path d="M17.700 18h5.200" stroke="#ecb22e" /><path d="M18 23.300v.1" stroke="#ecb22e" />
      <path d="M12.500 18v5.200" stroke="#e01e5a" /><path d="M7.200 18h.1" stroke="#e01e5a" />
    </g>
  </I30>
);
const Opera = () => (
  <I30>
    <path fillRule="evenodd" d="M15 1a14 14 0 1 0 0 28 14 14 0 0 0 0-28zm0 3c3.600 0 6 5 6 11s-2.400 11-6 11-6.500-5-6.500-11S11.400 4 15 4z" fill="#d2122e" />
    <path d="M12 4.500C16 1.500 20 2 24 5c7 6 6 15 0 20-4 3-8 3.500-12 .500 5 1.500 9.500-3 9.500-10.500S17 3 12 4.500z" fill="#ff4b4b" />
  </I30>
);
const Recorder = () => (
  <I30>
    <circle cx="15" cy="15" r="13" fill="#000" stroke="#fff" strokeWidth="1.600" />
    <circle cx="15" cy="15" r="8" fill="#ee2a2a" />
  </I30>
);
const Acrobat = () => (
  <div className="flex size-[27px] items-center justify-center rounded-[4px] bg-[#b30b00]">
    <Svg vb="0 0 20 20" className="size-[19px]">
      <path d="M9.500 2.200c1.600-.6 1.800 2.500.8 6C9 12.500 5.500 18 3.200 17.700c-2.500-.6 1-4 6.300-4.900 4.500-.8 9.200-.5 8.500 1.200-.8 1.600-4.500-.5-7-3.800-2.300-3-3-7.500-1.500-8z" stroke="#fff" strokeWidth="1.500" />
    </Svg>
  </div>
);
const WhatsApp = () => (
  <I30>
    <path d="M.500 29.500L2.500 22A14.600 14.600 0 1 1 8 27.500z" fill="#fff" />
    <path d="M3.200 26.800L4.900 21.500A12.200 12.200 0 1 1 8.500 25.200z" fill="#3fc351" />
    <path d="M10.500 8.500c-2.500 1.500-1.500 5 1.500 8.200s6.500 4.800 8.300 2.800c1.200-1.500.5-2-.7-2.700-1.300-.8-1.800-.8-2.600.2-.9.9-1.200.7-3-.8s-2-2.300-1.300-3c.9-.9.600-1.500.1-2.700-.6-1.500-1-2.500-2.300-2z" fill="#fff" />
  </I30>
);
const Control = () => (
  <I30>
    <rect x=".7" y="4.700" width="28.600" height="21" fill="#a5defa" stroke="#2ba8e8" strokeWidth="1.400" />
    <circle cx="9.500" cy="13" r="6" fill="#1372c8" />
    <path d="M9.500 13V7a6 6 0 0 1 6 6z" fill="#f7941e" />
    <path d="M18 11.500h3l2-2.500M21 11.500l2 3M21 13v4M18 17h3" stroke="#1372c8" strokeWidth="1.200" />
    <rect x="22.500" y="8" width="3.500" height="3" fill="#1372c8" /><rect x="22.500" y="13" width="3.500" height="3" fill="#1372c8" />
    <path d="M4 22.500h10" stroke="#f7941e" strokeWidth="1.800" /><path d="M15 22.500h10" stroke="#1372c8" strokeWidth="1.500" />
  </I30>
);

const APPS = [
  [TaskView], [Chat], [Terminal], [Explorer, "wide"], [Wps], [VsCode, "dot"], [Chrome, "active"], [Xampp, "dot"], [Postman, "dot"],
  [Photoshop], [VBox], [Slack], [Opera], [Recorder], [Acrobat, "dot"], [WhatsApp, "dot"], [Control, "dot"],
];

const MARKS = {
  dot: <div className="absolute bottom-[6px] h-[4px] w-[8px] rounded-full bg-[#a29a98]" />,
  wide: (
    <div className="absolute bottom-[6px] h-[4px] w-[30px] rounded-full bg-[#4a3029]">
      <div className="h-full w-[18px] rounded-full bg-[#a89f9c]" />
    </div>
  ),
  active: <div className="absolute bottom-[6px] h-[4px] w-[20px] rounded-full bg-[#4cc2ff]" />,
};

function Taskbar() {
  return (
    <div className="flex h-[60px] shrink-0 items-center border-t border-[#453a3c] bg-[linear-gradient(90deg,#4b1323_0%,#4b1323_23%,#561216_29%,#3d1f14_33%,#3d1e13_66%,#521216_71%,#4a1422_74%,#18283a_78.500%,#132c31_82%,#152b2e_100%)] pr-[25px] pl-[24px] text-[14.500px] text-white">
      <WeatherIcon />
      <div className="ml-[6px] w-[206px] leading-[20px] tracking-[-0.5px]">
        <div>10°C</div>
        <div className="text-[#c9bdc1]">Rain</div>
      </div>
      <div className="grid size-[30px] grid-cols-2 gap-[1.500px]">
        <div className="bg-linear-to-br from-[#7be9fb] to-[#4fcdfa]" />
        <div className="bg-linear-to-br from-[#5edcfb] to-[#38bdf9]" />
        <div className="bg-linear-to-br from-[#4bc9fa] to-[#25aaf8]" />
        <div className="bg-linear-to-br from-[#35b7f9] to-[#1496f5]" />
      </div>
      <div className="ml-[17px] flex h-[38px] w-[273px] items-center rounded-full bg-[#f5f1f2] pr-[5px] pl-[13px] text-[17px] tracking-[-0.45px] text-[#65615f]">
        <Svg vb="0 0 20 20" className="mr-[12px] size-5">
          <circle cx="9" cy="8.500" r="6.900" stroke="#222" strokeWidth="2" />
          <path d="M14 13.500l4.500 5" stroke="#222" strokeWidth="2.300" strokeLinecap="round" />
        </Svg>
        <span className="flex-1">Search</span>
        <Pumpkins />
      </div>
      <div className="ml-[3px] flex">
        {APPS.map(([Icon, mark], i) => (
          <div key={i} className="relative flex h-[59px] w-[55px] items-center justify-center">
            {mark === "active" && (
              <>
                <div className="absolute top-[4px] left-[3px] h-[50px] w-[50px] rounded-[5px] border border-white/10 bg-white/3" />
                <div className="absolute top-[4px] left-[3px] h-[50px] w-[44px] rounded-[5px] border border-white/5 bg-white/5" />
              </>
            )}
            <div className="relative flex"><Icon /></div>
            {MARKS[mark]}
          </div>
        ))}
      </div>
      <div className="flex flex-1 items-center justify-end">
        <Svg vb="0 0 14 8" className="h-2 w-[14px]"><path d="M1 7l6-6 6 6" stroke="#fff" strokeWidth="1.800" /></Svg>
        <Svg vb="0 0 14 20" className="ml-[26px] h-5 w-[14px]">
          <rect x="4" y="1" width="6" height="11.500" rx="3" stroke="#7fd0e4" strokeWidth="1.400" />
          <path d="M1 9.500a6 6 0 0 0 12 0M7 15.500V20" stroke="#7fd0e4" strokeWidth="1.400" />
        </Svg>
        <div className="mr-[24px] ml-[26px] flex w-[30px] flex-col items-center leading-[20px] tracking-[-0.4px]">
          <div>ENG</div>
          <div>UK</div>
        </div>
        <Svg vb="0 0 20 16" className="ml-[-2px] h-4 w-5">
          <path d="M.8 5.500a13 13 0 0 1 18.400 0M3.600 8.500a9 9 0 0 1 12.800 0M6.500 11.400a5 5 0 0 1 7 0" stroke="#fff" strokeWidth="1.400" />
          <circle cx="10" cy="14" r="1.800" fill="#fff" />
        </Svg>
        <Svg vb="0 0 20 16" className="ml-[10px] h-4 w-5">
          <path d="M1 5.500h2.500L8 1.300v13.400L3.500 10.500H1z" stroke="#fff" strokeWidth="1.300" strokeLinejoin="round" />
          <path d="M10.500 5.200a4 4 0 0 1 0 5.600M13 3a7.200 7.200 0 0 1 0 10" stroke="#fff" strokeWidth="1.300" />
          <path d="M15.700 1a10 10 0 0 1 0 14" stroke="#56676b" strokeWidth="1.300" />
        </Svg>
        <Svg vb="0 0 20 17" className="mb-[3px] ml-[10px] h-[17px] w-5">
          <path d="M7 4.500h8.500a1.500 1.500 0 0 1 1.500 1.500v7a2 2 0 0 1-2 2H4a2 2 0 0 1-2-2v-2.500M18.500 7.500v4" stroke="#fff" strokeWidth="1.500" />
          <path d="M8 6.500h7v6.500H4V11z" fill="#fff" />
          <path d="M4 0L.5 6.500H3L2 11l4.500-6.500H4z" fill="#fff" />
        </Svg>
        <div className="mr-[9px] ml-[20px] w-[78px] text-right leading-[20px] whitespace-nowrap">
          <div>7:28 PM</div>
          <div>31/10/2023</div>
        </div>
        <div className="flex size-5 items-center justify-center rounded-full bg-[#4cc2ff] text-[12px] text-black">1</div>
      </div>
    </div>
  );
}

export default function App() {
  return (
    <div className="flex h-[1080px] w-[1920px] flex-col overflow-hidden bg-white font-['Open_Sans',sans-serif]">
      <TabStrip />
      <Toolbar />
      <div className="flex h-[924px] shrink-0">
        <div className="flex w-[1849px] flex-col">
          <Header />
          <div className="flex flex-1">
            <Sidebar />
            <Main />
          </div>
        </div>
        <Rail />
        <Scrollbar />
      </div>
      <Taskbar />
    </div>
  );
}
